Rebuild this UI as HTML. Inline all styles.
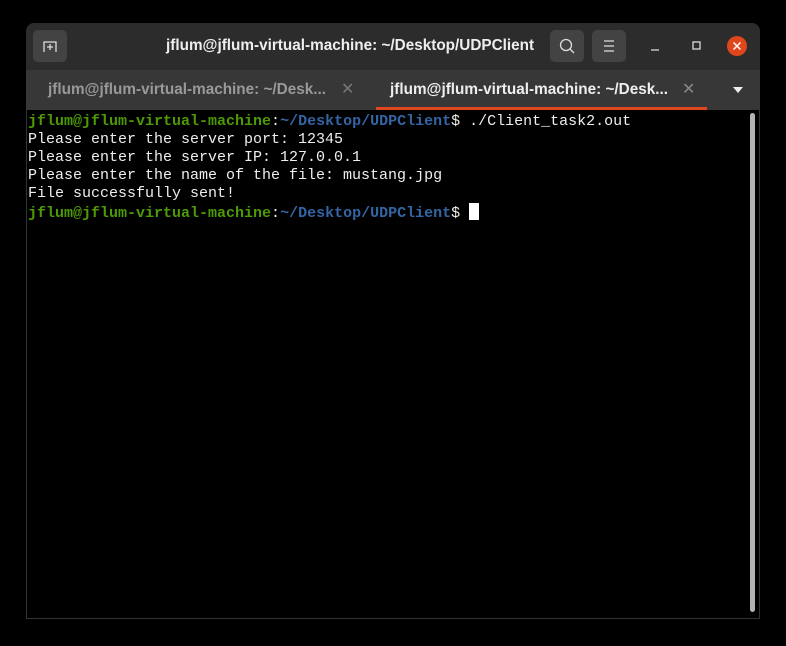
<!DOCTYPE html>
<html><head><meta charset="utf-8"><style>
body{margin:0;width:786px;height:646px;background:#000;position:relative;overflow:hidden;font-family:"Liberation Sans",sans-serif}
.win{position:absolute;left:26px;top:23px;width:734px;height:596px;background:#000;border-radius:8px 8px 0 0;overflow:hidden}
.hdr{position:absolute;left:0;top:0;width:734px;height:47px;background:#2c2c2c}
.tabs{position:absolute;left:0;top:47px;width:734px;height:40px;background:#373737}
.btn{position:absolute;top:7px;width:34px;height:32px;background:#434343;border-radius:5px}
.title{position:absolute;left:140px;top:14px;color:#eee;font-weight:bold;font-size:15.3px;white-space:nowrap}
.tab{position:absolute;top:11px;font-size:15.3px;font-weight:bold;white-space:nowrap}
.term{position:absolute;left:0;top:87px;width:732px;height:508px;border:1px solid #333;border-top:none}
pre{margin:0;position:absolute;left:1px;top:3px;font-family:"Liberation Mono",monospace;font-size:15px;line-height:18px;color:#eeeeec}
.g{color:#4e9a06;font-weight:bold}.b{color:#3465a4;font-weight:bold}
.cur{display:inline-block;width:10px;height:17px;background:#fff;vertical-align:-3px}
</style></head><body>
<div class="win">
<div class="hdr">
<div class="btn" style="left:7px"><svg width="34" height="32"><path d="M11 22V12h12v10M17 14v6M14 17h6" stroke="#ddd" stroke-width="1.3" fill="none"/></svg></div>
<div class="title">jflum@jflum-virtual-machine: ~/Desktop/UDPClient</div>
<div class="btn" style="left:524px"><svg width="34" height="32"><circle cx="16" cy="15" r="5.5" stroke="#ddd" stroke-width="1.3" fill="none"/><path d="M20 19l4 4" stroke="#ddd" stroke-width="1.3"/></svg></div>
<div class="btn" style="left:566px"><svg width="34" height="32"><path d="M12 11h10M12 16h10M12 21h10" stroke="#ddd" stroke-width="1.2"/></svg></div>
<svg style="position:absolute;left:620px;top:12px" width="114" height="24"><path d="M5 15h8" stroke="#ddd" stroke-width="1.3"/><rect x="47" y="7" width="7" height="7" stroke="#ddd" stroke-width="1.3" fill="none"/><circle cx="91" cy="11" r="10" fill="#e0461c"/><path d="M87.5 7.5l7 7M94.5 7.5l-7 7" stroke="#fff" stroke-width="1.5"/></svg>
</div>
<div class="tabs">
<div class="tab" style="left:22px;color:#999">jflum@jflum-virtual-machine: ~/Desk...</div>
<div class="tab" style="left:315px;color:#777;font-weight:normal;font-size:16px;top:9px">✕</div>
<div class="tab" style="left:364px;color:#eee">jflum@jflum-virtual-machine: ~/Desk...</div>
<div class="tab" style="left:656px;color:#888;font-weight:normal;font-size:16px;top:9px">✕</div>
<svg style="position:absolute;left:706px;top:16px" width="12" height="8"><path d="M1 1h10l-5 6z" fill="#eee"/></svg>
<div style="position:absolute;left:350px;top:37px;width:331px;height:3px;background:#e0461c"></div>
</div>
<div class="term">
<pre><span class="g">jflum@jflum-virtual-machine</span>:<span class="b">~/Desktop/UDPClient</span>$ ./Client_task2.out
Please enter the server port: 12345
Please enter the server IP: 127.0.0.1
Please enter the name of the file: mustang.jpg
File successfully sent!
<span class="g">jflum@jflum-virtual-machine</span>:<span class="b">~/Desktop/UDPClient</span>$ <span class="cur"></span></pre>
<div style="position:absolute;left:723px;top:3px;width:5px;height:499px;background:#b3b3b3;border-radius:3px"></div>
</div>
</div>
</body></html>
